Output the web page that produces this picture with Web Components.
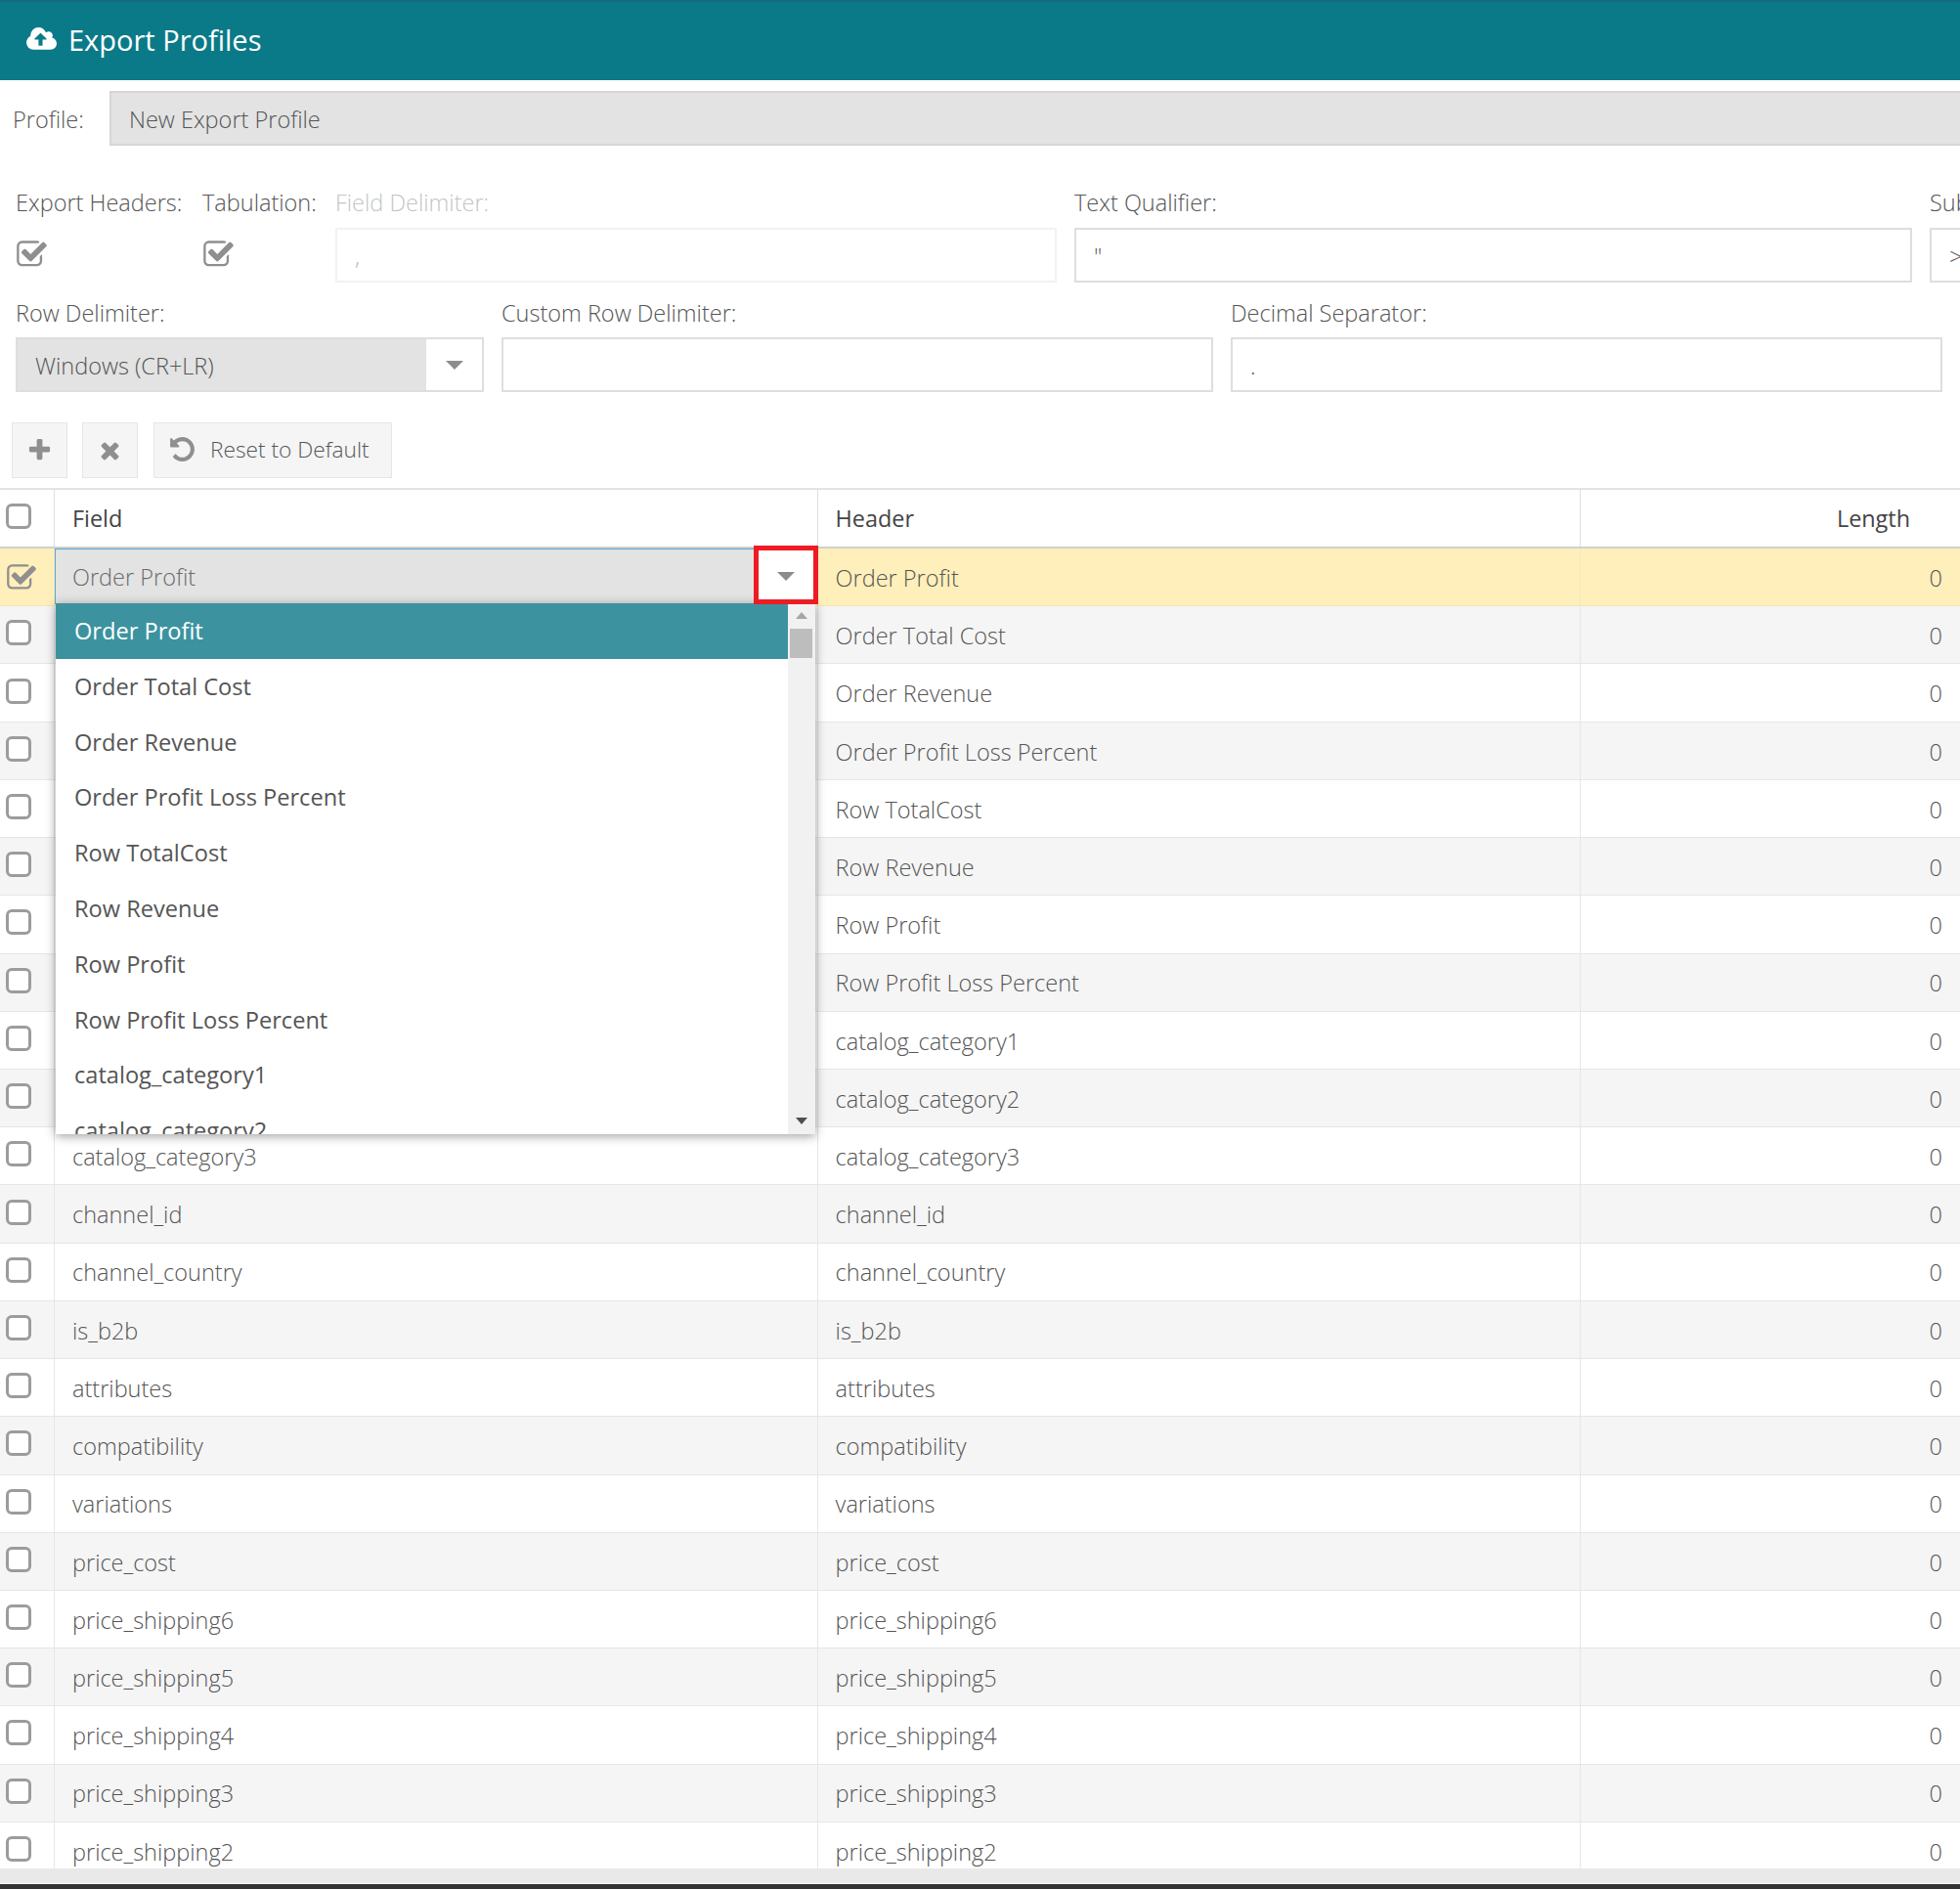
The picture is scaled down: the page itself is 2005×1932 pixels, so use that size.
<!DOCTYPE html>
<html lang="en">
<head>
<meta charset="utf-8">
<title>Export Profiles</title>
<style>
  html, body { margin: 0; padding: 0; height: 100%; overflow: hidden; background: #fff; }
  body { font: 300 23.5px "Open Sans", "Liberation Sans", sans-serif; color: #555; }
</style>
</head>
<body>
<export-app></export-app>

<script>
const ICONS = {
  cloud: ['0 0 1920 1792', 'M1280 864q0-14-9-23l-352-352q-9-9-23-9t-23 9l-351 351q-10 12-10 24 0 14 9 23t23 9h224v352q0 13 9.5 22.5t22.5 9.5h192q13 0 22.5-9.5t9.5-22.5v-352h224q13 0 22.5-9.5t9.5-22.5zm640 288q0 159-112.5 271.5t-271.5 112.5h-1088q-185 0-316.5-131.5t-131.5-316.5q0-130 70-240t188-165q-2-30-2-43 0-212 150-362t362-150q156 0 285.5 87t188.5 231q71-62 166-62 106 0 181 75t75 181q0 76-41 138 130 31 213.5 135.5t83.5 238.5z'],
  check: ['0 0 1792 1792', 'M1472 930v318q0 119-84.5 203.5t-203.5 84.5h-832q-119 0-203.5-84.5t-84.5-203.5v-832q0-119 84.5-203.5t203.5-84.5h832q63 0 117 25 15 7 18 23 3 17-9 29l-49 49q-10 10-23 10-3 0-9-2-23-6-45-6h-832q-66 0-113 47t-47 113v832q0 66 47 113t113 47h832q66 0 113-47t47-113v-254q0-13 9-22l64-64q10-10 23-10 6 0 12 3 20 8 20 29zm231-489l-814 814q-24 24-57 24t-57-24l-430-430q-24-24-24-57t24-57l110-110q24-24 57-24t57 24l263 263 647-647q24-24 57-24t57 24l110 110q24 24 24 57t-24 57z'],
  plus: ['0 0 1792 1792', 'M1600 736v192q0 40-28 68t-68 28h-416v416q0 40-28 68t-68 28h-192q-40 0-68-28t-28-68v-416h-416q-40 0-68-28t-28-68v-192q0-40 28-68t68-28h416v-416q0-40 28-68t68-28h192q40 0 68 28t28 68v416h416q40 0 68 28t28 68z'],
  times: ['0 0 1792 1792', 'M1490 1322q0 40-28 68l-136 136q-28 28-68 28t-68-28l-294-294-294 294q-28 28-68 28t-68-28l-136-136q-28-28-28-68t28-68l294-294-294-294q-28-28-28-68t28-68l136-136q28-28 68-28t68 28l294 294 294-294q28-28 68-28t68 28l136 136q28 28 28 68t-28 68l-294 294 294 294q28 28 28 68z'],
  undo: ['0 0 1792 1792', 'M1664 896q0 156-61 298t-164 245-245 164-298 61q-172 0-327-72.5t-264-204.5q-7-10-6.5-22.5t8.5-20.5l137-138q10-9 25-9 16 2 23 12 73 95 179 147t225 52q104 0 198.5-40.5t163.5-109.5 109.5-163.5 40.5-198.5-40.5-198.5-109.5-163.5-163.5-109.5-198.5-40.5q-98 0-188 35.5t-160 101.5l137 138q31 30 14 69-17 40-59 40h-448q-26 0-45-19t-19-45v-448q0-42 40-59 39-17 69 14l130 129q107-101 244.5-156.5t284.5-55.5q156 0 298 61t245 164 164 245 61 298z']
};

function iconSvg(name, size, color) {
  const [box, d] = ICONS[name];
  return `<svg viewBox="${box}" width="${size}" height="${size}" style="display:block;flex:none" fill="${color}"><path d="${d}"/></svg>`;
}

// small down pointing triangle used by both combos
function caretSvg() {
  return '<svg viewBox="0 0 18 9" width="18" height="9" style="display:block" fill="#8c8c8c"><path d="M0 0h18l-9 9z"/></svg>';
}

class TitleBar extends HTMLElement {
  constructor() {
    super();
    this.attachShadow({ mode: 'open' });
    this.shadowRoot.innerHTML = `
      <style>
        :host { display: flex; align-items: center; gap: 12px; height: 82px; box-sizing: border-box;
                padding: 0 0 3px 27px; background: #0b7a88; border-top: 2px solid #14697a; color: #fff; }
        span { font-size: 29px; font-weight: 400; line-height: 1; }
      </style>
      ${iconSvg('cloud', 31, '#fff')}
      <span><slot></slot></span>`;
  }
}
customElements.define('title-bar', TitleBar);

class FormField extends HTMLElement {
  constructor() {
    super();
    this.attachShadow({ mode: 'open' });
  }

  connectedCallback() {
    const label = this.getAttribute('label');
    const value = this.getAttribute('value') || '';
    const off = this.hasAttribute('disabled');
    const type = this.getAttribute('type') || 'text';
    let control = `<div class="box">${value}</div>`;
    if (type === 'check') control = `<div class="chk">${iconSvg('check', 33, '#8f8f8f')}</div>`;
    if (type === 'combo') control = `<div class="box combo"><div class="val">${value}</div><div class="btn">${caretSvg()}</div></div>`;
    this.shadowRoot.innerHTML = `
      <style>
        :host { display: block; flex: none; }
        label { display: block; height: 30px; line-height: var(--label-lh, 29px); white-space: nowrap; color: ${off ? '#c4c4c4' : '#555'}; }
        .box { margin-top: 10px; height: 56px; box-sizing: border-box; padding: 2px 18px 0; line-height: 50px;
               border: 2px solid ${off ? '#f2f2f2' : '#dedede'}; color: ${off ? '#b8b8b8' : '#555'}; white-space: nowrap; overflow: hidden; }
        .chk { margin-top: 17px; height: 40px; display: flex; align-items: center; }
        .combo { display: flex; padding: 0; }
        .val { flex: 1; background: #e3e3e3; padding-left: 18px; line-height: 54px; }
        .btn { width: 57px; display: flex; align-items: center; justify-content: center; }
      </style>
      <label>${label}</label>${control}`;
  }
}
customElements.define('form-field', FormField);

class ToolButton extends HTMLElement {
  constructor() {
    super();
    this.attachShadow({ mode: 'open' });
    this.shadowRoot.innerHTML = `
      <style>
        :host { display: flex; align-items: center; justify-content: center; gap: 14px; height: 57px; min-width: 57px;
                box-sizing: border-box; padding: 0 3px; background: #f5f5f5; border: 1px solid #e6e6e6; color: #555; }
        :host([text]) { margin-left: 1px; padding: 0 22px 2px 14px; font-size: 22.7px; }
      </style>
      <slot></slot>`;
  }
}
customElements.define('tool-button', ToolButton);

class GridRow extends HTMLElement {
  constructor() {
    super();
    this.attachShadow({ mode: 'open' });
    this.shadowRoot.innerHTML = `
      <style>
        :host { display: grid; grid-template-columns: 55px 781px 780px 1fr; height: 59.23px; box-sizing: border-box;
                border-bottom: 1px solid #e6e6e6; background: #fff; }
        :host(.alt) { background: #f5f5f5; }
        :host(.sel) { background: #ffefba; position: relative; z-index: 2; border-bottom-color: #f1e4b8; }
        :host(.head) { height: 60px; border-bottom: 2px solid #cfcfcf; color: #444; font-weight: 400; font-size: 23.4px; }
        .c { display: flex; align-items: center; min-width: 0; padding: 1.5px 0 0 17.6px; box-sizing: border-box;
             border-left: 1px solid #e6e6e6; white-space: nowrap; }
        :host(.sel) .c { border-left-color: #f5e8bd; }
        :host(.head) .c { border-left-color: #dedede; padding-top: 0; padding-bottom: 1px; }
        .tick { padding: 0 0 4px 6px !important; border-left: 0; }
        .box { width: 26px; height: 26px; box-sizing: border-box; border: 3px solid #9c9c9c; border-radius: 6px; background: #fff; }
        .len { justify-content: flex-end; padding-right: 18px; }
        :host(.head) .len { padding-right: 51px; }
        .field { padding-left: 0; }
      </style>
      <div class="c tick"><slot name="tick"><div class="box"></div></slot></div>
      <div class="c field"><slot name="field"></slot></div>
      <div class="c"><slot name="header"></slot></div>
      <div class="c len"><slot name="length"></slot></div>`;
  }
}
customElements.define('grid-row', GridRow);

class FieldEditor extends HTMLElement {
  constructor() {
    super();
    this.attachShadow({ mode: 'open' });
    const items = ['Order Total Cost', 'Order Revenue', 'Order Profit Loss Percent', 'Row TotalCost', 'Row Revenue',
      'Row Profit', 'Row Profit Loss Percent', 'catalog_category1', 'catalog_category2'];
    this.shadowRoot.innerHTML = `
      <style>
        :host { display: block; position: relative; align-self: flex-start; width: 100%; height: 57px; margin-top: -1.5px; }
        .input { height: 57px; box-sizing: border-box; margin-right: 63px; background: #e3e3e3; border-top: 1px solid #5aa7d8;
                 border-left: 1px solid #5aa7d8; padding-left: 17px; line-height: 56px; color: #6a6a6a; }
        .mark { position: absolute; left: 715px; top: -3px; width: 66px; height: 60px; box-sizing: border-box;
                border: 5px solid #ed1c24; background: #fff; display: flex; align-items: center; justify-content: center; z-index: 3; }
        .mark svg { margin-top: 2px; }
        .list { position: absolute; left: 1px; top: 56px; width: 777px; height: 543px; overflow: hidden; background: #fff;
                box-shadow: 0 2px 10px rgba(0,0,0,.38); color: #555; z-index: 2; font-size: 23.6px; font-weight: 400; }
        .item { height: 56.8px; line-height: 56px; padding-left: 19px; }
        .item.on { background: #3c939f; color: #fff; margin-right: 28px; }
        .bar { position: absolute; right: 0; top: 0; bottom: 0; width: 28px; background: #f1f1f1; }
        .up, .down { position: absolute; left: 8px; width: 0; height: 0; border-left: 6px solid transparent; border-right: 6px solid transparent; }
        .up { top: 9px; border-bottom: 7px solid #a6a6a6; }
        .down { bottom: 10px; border-top: 7px solid #505050; }
        .thumb { position: absolute; left: 2px; right: 3px; top: 26px; height: 30px; background: #bdbdbd; }
      </style>
      <div class="input">Order Profit</div>
      <div class="mark">${caretSvg()}</div>
      <div class="list">
        <div class="item on">Order Profit</div>
        ${items.map((t) => `<div class="item">${t}</div>`).join('')}
        <div class="bar"><div class="up"></div><div class="thumb"></div><div class="down"></div></div>
      </div>`;
  }
}
customElements.define('field-editor', FieldEditor);

class ExportGrid extends HTMLElement {
  constructor() {
    super();
    this.attachShadow({ mode: 'open' });
    const fields = ['Order Profit', 'Order Total Cost', 'Order Revenue', 'Order Profit Loss Percent', 'Row TotalCost',
      'Row Revenue', 'Row Profit', 'Row Profit Loss Percent', 'catalog_category1', 'catalog_category2', 'catalog_category3',
      'channel_id', 'channel_country', 'is_b2b', 'attributes', 'compatibility', 'variations', 'price_cost',
      'price_shipping6', 'price_shipping5', 'price_shipping4', 'price_shipping3', 'price_shipping2'];
    const rows = fields.map((f, i) => {
      if (i === 0) {
        return `<grid-row class="sel">
          <div slot="tick" style="width:31px;height:31px;margin-top:4px">${iconSvg('check', 32, '#8f8f8f')}</div>
          <field-editor slot="field"></field-editor>
          <span slot="header">${f}</span><span slot="length">0</span></grid-row>`;
      }
      return `<grid-row class="${i % 2 ? 'alt' : ''}">
        <span slot="field" style="padding-left:18px">${f}</span>
        <span slot="header">${f}</span><span slot="length">0</span></grid-row>`;
    }).join('');
    this.shadowRoot.innerHTML = `
      <style>
        :host { display: block; height: 413px; flex: 1; min-height: 0; overflow: hidden; border-top: 2px solid #e3e3e3; }
      </style>
      <grid-row class="head">
        <span slot="field" style="padding-left:18px">Field</span>
        <span slot="header">Header</span><span slot="length">Length</span>
      </grid-row>
      ${rows}`;
  }
}
customElements.define('export-grid', ExportGrid);

class ExportApp extends HTMLElement {
  constructor() {
    super();
    this.attachShadow({ mode: 'open' });
    this.shadowRoot.innerHTML = `
      <style>
        :host { display: flex; flex-direction: column; width: 2005px; height: 1932px; overflow: hidden; }
        .profile { display: flex; align-items: center; margin-top: 11px; height: 56px; }
        .profile label { width: 112px; padding-left: 13px; box-sizing: border-box; flex: none; padding-top: 1px; }
        .profile div { flex: 1; height: 56px; box-sizing: border-box; background: #e3e3e3; border: 2px solid #d6d6d6; border-right: 0;
                       padding-left: 18px; line-height: 54px; color: #555; }
        .fields { display: flex; padding-left: 16px; white-space: nowrap; }
        .r1 { margin-top: 44px; height: 96px; }
        .r2 { margin-top: 16px; height: 96px; --label-lh: 31px; }
        .tools { display: flex; gap: 15px; padding-left: 12px; margin-top: 31px; margin-bottom: 10px; }
        .end { flex: none; height: 21px; background: #e9e9e9; border-bottom: 5px solid #333; box-sizing: border-box; box-shadow: inset 0 -1px 0 #fff; }
      </style>
      <title-bar>Export Profiles</title-bar>
      <div class="profile"><label>Profile:</label><div>New Export Profile</div></div>
      <div class="fields r1">
        <form-field type="check" label="Export Headers:" style="width:191px"></form-field>
        <form-field type="check" label="Tabulation:" style="width:136px"></form-field>
        <form-field label="Field Delimiter:" value="," disabled style="width:738px;margin-right:18px"></form-field>
        <form-field label="Text Qualifier:" value="&quot;" style="width:857px;margin-right:18px"></form-field>
        <form-field label="Sub-Field Delimiter:" value="&gt;" style="width:300px"></form-field>
      </div>
      <div class="fields r2">
        <form-field type="combo" label="Row Delimiter:" value="Windows (CR+LR)" style="width:479px;margin-right:18px"></form-field>
        <form-field label="Custom Row Delimiter:" style="width:728px;margin-right:18px"></form-field>
        <form-field label="Decimal Separator:" value="." style="width:728px"></form-field>
      </div>
      <div class="tools">
        <tool-button>${iconSvg('plus', 27, '#8f8f8f')}</tool-button>
        <tool-button>${iconSvg('times', 27, '#8f8f8f')}</tool-button>
        <tool-button text>${iconSvg('undo', 29, '#8f8f8f')}<span>Reset to Default</span></tool-button>
      </div>
      <export-grid></export-grid>
      <div class="end"></div>`;
  }
}
customElements.define('export-app', ExportApp);
</script>
</body>
</html>
